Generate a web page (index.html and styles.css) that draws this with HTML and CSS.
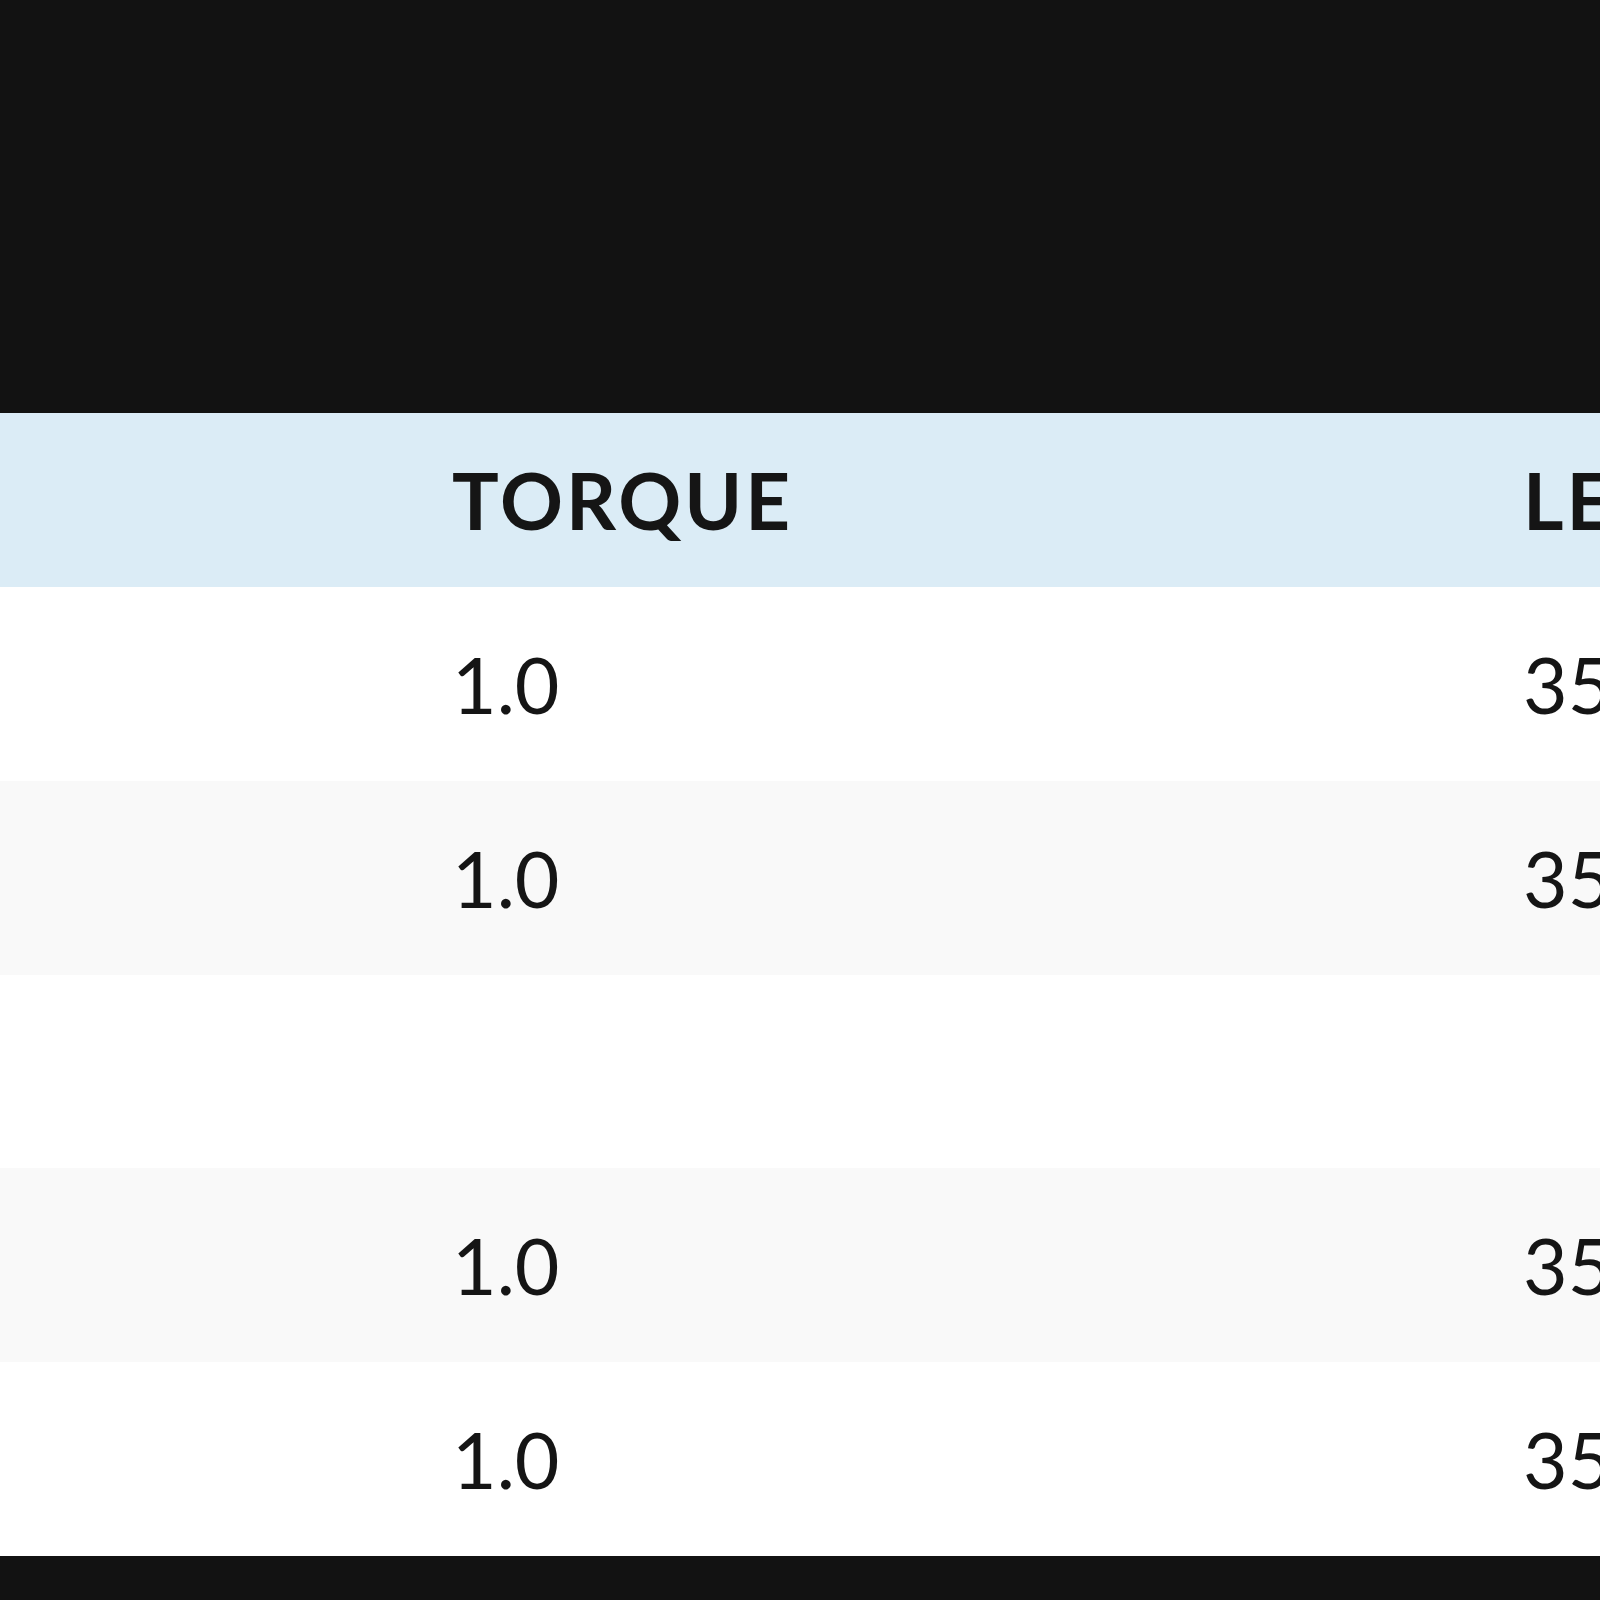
FILE: index.html
```html
<!DOCTYPE html>
<html>
<head>
<meta charset="utf-8">
<link rel="stylesheet" href="styles.css">
</head>
<body>
<div class="page">
  <div class="top"></div>
  <div class="table">
    <div class="row head">
      <div class="cell"></div>
      <div class="cell">TORQUE</div>
      <div class="cell">LENGTH</div>
    </div>
    <div class="row">
      <div class="cell"></div>
      <div class="cell">1.0</div>
      <div class="cell">35</div>
    </div>
    <div class="row alt">
      <div class="cell"></div>
      <div class="cell">1.0</div>
      <div class="cell">35</div>
    </div>
    <div class="row">
      <div class="cell"></div>
      <div class="cell"></div>
      <div class="cell"></div>
    </div>
    <div class="row alt">
      <div class="cell"></div>
      <div class="cell">1.0</div>
      <div class="cell">35</div>
    </div>
    <div class="row">
      <div class="cell"></div>
      <div class="cell">1.0</div>
      <div class="cell">35</div>
    </div>
  </div>
  <div class="bottom"></div>
</div>
</body>
</html>
```
FILE: styles.css
```css
html, body {
  margin: 0;
  padding: 0;
  background: #121212;
}
.page {
  width: 1600px;
  height: 1600px;
  overflow: hidden;
  display: flex;
  flex-direction: column;
  font-family: "Lato", "Open Sans", sans-serif;
  color: #151515;
}
.top {
  height: 413px;
  background: #121212;
  flex: none;
}
.table {
  display: flex;
  flex-direction: column;
  flex: none;
}
.row {
  display: grid;
  grid-template-columns: 452px 1071px 1fr;
  height: 193.8px;
  align-items: center;
  background: #ffffff;
  font-size: 77px;
  white-space: nowrap;
  overflow: hidden;
}
.row.alt {
  background: #f9f9f9;
}
.row.head {
  height: 174px;
  background: #dbecf6;
  font-weight: 700;
  font-size: 78px;
  letter-spacing: 3px;
}
.cell {
  overflow: hidden;
}
.bottom {
  flex: 1;
  background: #121212;
}
```
